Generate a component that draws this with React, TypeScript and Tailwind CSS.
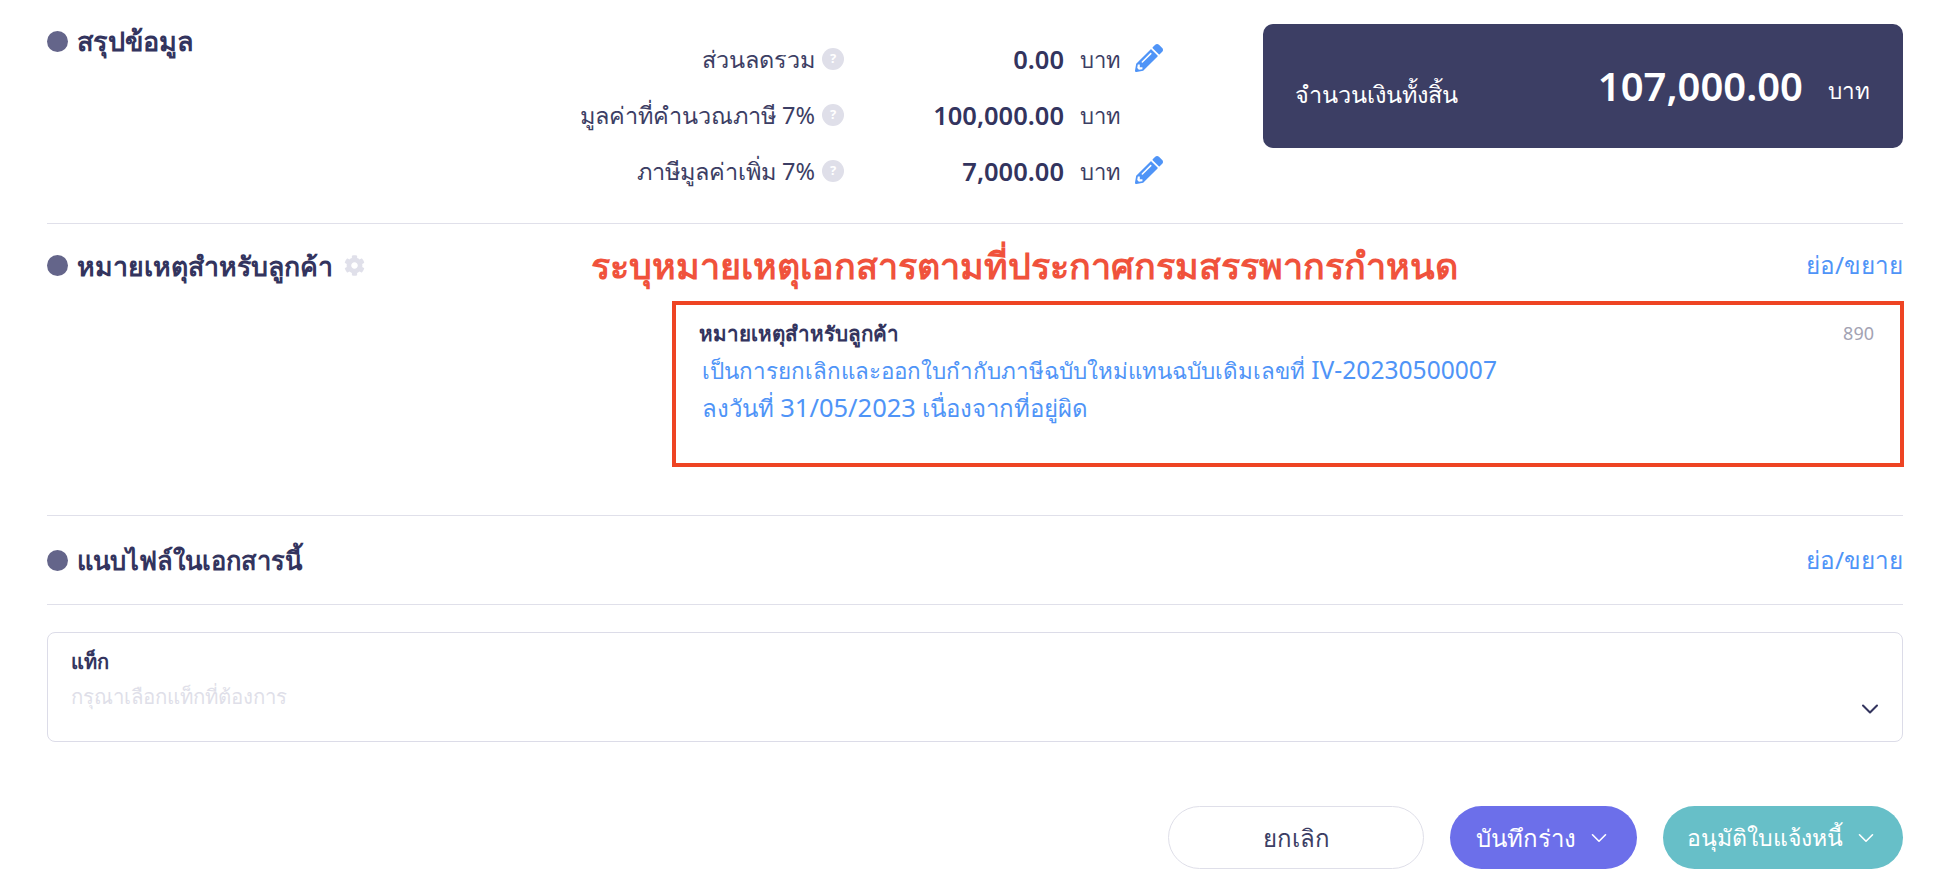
import React from "react";
import { FaPencilAlt, FaCog } from "react-icons/fa";
import { ChevronDown } from "lucide-react";

const rows = [
  { label: "ส่วนลดรวม", value: "0.00", edit: true },
  { label: "มูลค่าที่คำนวณภาษี 7%", value: "100,000.00", edit: false },
  { label: "ภาษีมูลค่าเพิ่ม 7%", value: "7,000.00", edit: true },
];

const SectionTitle = ({
  title,
  size = "text-[27px]",
  children,
}: {
  title: string;
  size?: string;
  children?: React.ReactNode;
}) => (
  <div className="flex items-center">
    <span className="h-[21px] w-[21px] rounded-full bg-[#64658a]" />
    <h2 className={`ml-[9px] leading-[36px] font-semibold text-[#33345e] ${size}`}>{title}</h2>
    {children}
  </div>
);

const App = () => {
  return (
    <div className="h-[886px] w-full overflow-hidden bg-white px-[47px] font-['Noto_Sans','Liberation_Sans',sans-serif] text-[#3c3e64]">
      {/* summary */}
      <section className="flex h-[224px] items-start justify-between border-b border-[#e0e0ea] pt-[24px]">
        <div className="-mt-px">
          <SectionTitle title="สรุปข้อมูล" />
        </div>
        <div className="flex flex-1 justify-end">
          <div className="mt-[7px] flex flex-col items-end">
            {rows.map((row) => (
              <div className="flex h-[56px] items-center" key={row.label}>
                <span className="text-[23.5px] leading-[32px]">{row.label}</span>
                <span className="ml-[7px] flex h-[22px] w-[22px] items-center justify-center rounded-full bg-[#dfdfe9] text-[13px] font-bold text-white">
                  ?
                </span>
                <span className="w-[220px] text-right text-[25.5px] font-semibold text-[#33345e]">{row.value}</span>
                <span className="ml-[16px] w-[43px] text-[22px]">บาท</span>
                <span className="ml-[12px] w-[28px]">
                  {row.edit && <FaPencilAlt className="h-[28px] w-[28px] -translate-y-[1px] text-[#4f94f7]" />}
                </span>
              </div>
            ))}
          </div>
          <div className="ml-[100px] flex h-[124px] w-[640px] items-center rounded-[10px] bg-[#3c3e64] pr-[33px] pl-[32px] text-white">
            <span className="mt-[17px] text-[23.5px]">จำนวนเงินทั้งสิ้น</span>
            <span className="ml-auto text-[40px] font-semibold">107,000.00</span>
            <span className="mt-[10px] ml-[25px] text-[22.5px]">บาท</span>
          </div>
        </div>
      </section>

      {/* customer note */}
      <section className="h-[292px] border-b border-[#e0e0ea]">
        <div className="flex h-[77px] items-center justify-between pt-[6px]">
          <div className="w-[544px]">
            <SectionTitle title="หมายเหตุสำหรับลูกค้า" size="text-[26.7px]">
              <FaCog className="ml-[11px] h-[21px] w-[21px] text-[#e0e0ea]" />
            </SectionTitle>
          </div>
          <span className="mr-auto text-[36px] leading-[44px] font-bold text-[#f0523c]">
            ระบุหมายเหตุเอกสารตามที่ประกาศกรมสรรพากรกำหนด
          </span>
          <a className="text-[24.3px] text-[#4f94f7]">ย่อ/ขยาย</a>
        </div>
        <div className="-mr-px ml-auto h-[166px] w-[1232px] border-4 border-[#ee4423] pt-[14px] pr-[26px] pl-[23px]">
          <div className="flex items-center justify-between">
            <span className="text-[20.6px] leading-[28px] font-semibold text-[#33345e]">หมายเหตุสำหรับลูกค้า</span>
            <span className="text-[18px] text-[#a3a3b3]">890</span>
          </div>
          <div className="mt-[4px] ml-[3px] text-[24px] leading-[37px] text-[#4f94f7]">
            <p>
              <span className="text-[22.4px]">เป็นการยกเลิกและออกใบกำกับภาษีฉบับใหม่แทนฉบับเดิมเลขที่</span>{" "}
              <span className="text-[24.6px]">IV-20230500007</span>
            </p>
            <p>
              ลงวันที่ <span className="text-[25.5px]">31/05/2023</span> เนื่องจากที่อยู่ผิด
            </p>
          </div>
        </div>
      </section>

      {/* attachments */}
      <section className="flex h-[89px] items-center justify-between border-b border-[#e0e0ea]">
        <SectionTitle title="แนบไฟล์ในเอกสารนี้" size="text-[25.5px]" />
        <a className="text-[24.3px] text-[#4f94f7]">ย่อ/ขยาย</a>
      </section>

      {/* tag select */}
      <div className="mt-[27px] h-[110px] rounded-[8px] border border-[#dcdce8] pt-[14px] pr-[18px] pl-[23px]">
        <div className="text-[20px] leading-[30px] font-semibold text-[#33345e]">แท็ก</div>
        <div className="mt-[4px] flex items-start justify-between">
          <span className="text-[20.4px] leading-[30px] text-[#dfdfe9]">กรุณาเลือกแท็กที่ต้องการ</span>
          <ChevronDown className="mt-[14px] h-[28px] w-[28px] text-[#33345e]" strokeWidth={1.75} />
        </div>
      </div>

      {/* actions */}
      <div className="mt-[64px] flex justify-end">
        <button className="h-[63px] w-[256px] rounded-[32px] border border-[#dfdfe9] bg-white text-[24px] text-[#3c3e64]">
          ยกเลิก
        </button>
        <button className="ml-[26px] flex h-[63px] w-[187px] items-center justify-center gap-[10px] rounded-[32px] bg-[#6c6fea] text-[24px] text-white">
          บันทึกร่าง
          <ChevronDown className="h-[26px] w-[26px]" strokeWidth={1.5} />
        </button>
        <button className="ml-[26px] flex h-[63px] w-[240px] items-center justify-center gap-[10px] rounded-[32px] bg-[#67bfc8] text-[23px] text-white">
          อนุมัติใบแจ้งหนี้
          <ChevronDown className="h-[26px] w-[26px]" strokeWidth={1.5} />
        </button>
      </div>
    </div>
  );
};

export default App;
